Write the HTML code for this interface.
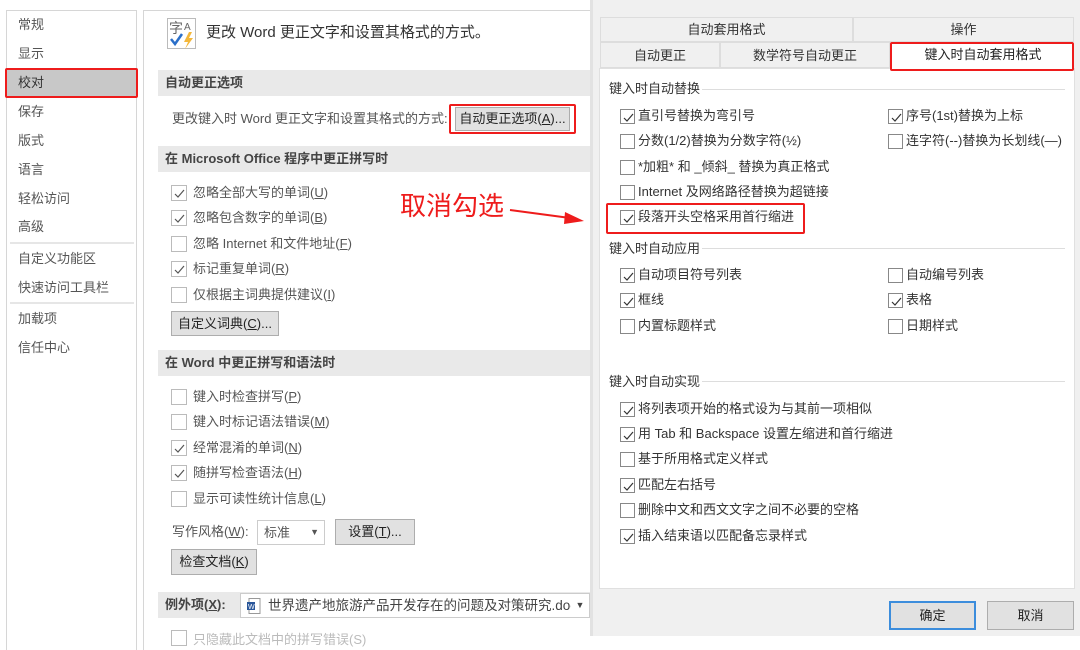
<!DOCTYPE html>
<html><head><meta charset="utf-8"><style>
*{margin:0;padding:0;box-sizing:border-box}
body{width:1080px;height:636px;overflow:hidden;background:#fff;font-family:"Liberation Sans","Noto Sans CJK SC",sans-serif;font-size:13px;color:#333;position:relative}
.a{position:absolute;white-space:nowrap}
.t{position:absolute;white-space:nowrap;line-height:16px}
.cb{position:absolute;width:15px;height:15px;border:1px solid #888;background:#fff}
.cb.l{border-color:#bbb;width:16px;height:16px}
.cb svg{position:absolute;left:1px;top:1px}
.band{position:absolute;left:158px;width:432px;height:26px;background:#e9e9e9;font-weight:bold;color:#444;padding-left:7px;line-height:26px}
.btn{position:absolute;background:#e1e1e1;border:1px solid #adadad;text-align:center;color:#222}
.grp{position:absolute;left:609px;color:#333}
.line{position:absolute;height:1px;background:#ddd}
</style></head><body>
<div class="a" style="left:6px;top:10px;width:131px;height:640px;border:1px solid #d6d6d6;border-bottom:none"></div>
<div class="a" style="left:5px;top:68px;width:133px;height:30px;background:#c8c8c8;border:2px solid #ee1c1c;border-radius:2px"></div>
<div class="t" style="left:18px;top:17px;color:#555">常规</div>
<div class="t" style="left:18px;top:46px;color:#555">显示</div>
<div class="t" style="left:18px;top:75px;color:#333">校对</div>
<div class="t" style="left:18px;top:104px;color:#555">保存</div>
<div class="t" style="left:18px;top:133px;color:#555">版式</div>
<div class="t" style="left:18px;top:162px;color:#555">语言</div>
<div class="t" style="left:18px;top:191px;color:#555">轻松访问</div>
<div class="t" style="left:18px;top:219px;color:#555">高级</div>
<div class="a" style="left:10px;top:242px;width:124px;height:2px;background:#e6e6e6"></div>
<div class="t" style="left:18px;top:251px;color:#555">自定义功能区</div>
<div class="t" style="left:18px;top:280px;color:#555">快速访问工具栏</div>
<div class="a" style="left:10px;top:302px;width:124px;height:2px;background:#e6e6e6"></div>
<div class="t" style="left:18px;top:311px;color:#555">加载项</div>
<div class="t" style="left:18px;top:340px;color:#555">信任中心</div>
<div class="a" style="left:143px;top:10px;width:448px;height:640px;border:1px solid #d6d6d6;border-bottom:none;border-right:none"></div>
<svg class="a" style="left:167px;top:18px" width="32" height="32" viewBox="0 0 32 32">
<rect x="0.5" y="0.5" width="28" height="30" fill="#fff" stroke="#bbb"/>
<text x="2" y="15" font-size="14" fill="#666" font-family="Noto Sans CJK SC">字</text>
<text x="17" y="12" font-size="10" fill="#666">A</text>
<path d="M4 21 L8 26 L15 16" stroke="#2b6fc9" stroke-width="2.5" fill="none"/>
<path d="M22 14 L17 24 L21 24 L18 31 L26 20 L22 20 L25 14Z" fill="#f4b73a"/>
</svg>
<div class="t" style="left:206px;top:25px;font-size:15px;color:#333">更改 Word 更正文字和设置其格式的方式。</div>
<div class="band" style="top:70px">自动更正选项</div>
<div class="t" style="left:172px;top:111px;color:#555">更改键入时 Word 更正文字和设置其格式的方式:</div>
<div class="btn" style="left:455px;top:107px;width:115px;height:24px;line-height:22px">自动更正选项(<u>A</u>)...</div>
<div class="a" style="left:449px;top:104px;width:127px;height:30px;border:2px solid #ee1c1c;border-radius:2px"></div>
<div class="band" style="top:146px">在 Microsoft Office 程序中更正拼写时</div>
<div class="cb l" style="left:171px;top:185px"><svg width="13" height="13"><path d="M2 7 L5 10 L11 3" stroke="#555" fill="none" stroke-width="1.2"/></svg></div>
<div class="t" style="left:193px;top:185px;color:#555">忽略全部大写的单词(<u>U</u>)</div>
<div class="cb l" style="left:171px;top:210px"><svg width="13" height="13"><path d="M2 7 L5 10 L11 3" stroke="#555" fill="none" stroke-width="1.2"/></svg></div>
<div class="t" style="left:193px;top:210px;color:#555">忽略包含数字的单词(<u>B</u>)</div>
<div class="cb l" style="left:171px;top:236px"></div>
<div class="t" style="left:193px;top:236px;color:#555">忽略 Internet 和文件地址(<u>F</u>)</div>
<div class="cb l" style="left:171px;top:261px"><svg width="13" height="13"><path d="M2 7 L5 10 L11 3" stroke="#555" fill="none" stroke-width="1.2"/></svg></div>
<div class="t" style="left:193px;top:261px;color:#555">标记重复单词(<u>R</u>)</div>
<div class="cb l" style="left:171px;top:287px"></div>
<div class="t" style="left:193px;top:287px;color:#555">仅根据主词典提供建议(<u>I</u>)</div>
<div class="btn" style="left:171px;top:311px;width:108px;height:25px;line-height:23px">自定义词典(<u>C</u>)...</div>
<div class="band" style="top:350px">在 Word 中更正拼写和语法时</div>
<div class="cb l" style="left:171px;top:389px"></div>
<div class="t" style="left:193px;top:389px;color:#555">键入时检查拼写(<u>P</u>)</div>
<div class="cb l" style="left:171px;top:414px"></div>
<div class="t" style="left:193px;top:414px;color:#555">键入时标记语法错误(<u>M</u>)</div>
<div class="cb l" style="left:171px;top:440px"><svg width="13" height="13"><path d="M2 7 L5 10 L11 3" stroke="#555" fill="none" stroke-width="1.2"/></svg></div>
<div class="t" style="left:193px;top:440px;color:#555">经常混淆的单词(<u>N</u>)</div>
<div class="cb l" style="left:171px;top:465px"><svg width="13" height="13"><path d="M2 7 L5 10 L11 3" stroke="#555" fill="none" stroke-width="1.2"/></svg></div>
<div class="t" style="left:193px;top:465px;color:#555">随拼写检查语法(<u>H</u>)</div>
<div class="cb l" style="left:171px;top:491px"></div>
<div class="t" style="left:193px;top:491px;color:#555">显示可读性统计信息(<u>L</u>)</div>
<div class="t" style="left:172px;top:524px;color:#555">写作风格(<u>W</u>):</div>
<div class="a" style="left:257px;top:520px;width:68px;height:25px;border:1px solid #ccc;background:#fff;padding-left:6px;line-height:23px;color:#555">标准<span style="position:absolute;right:5px;top:0;font-size:9px">▼</span></div>
<div class="btn" style="left:335px;top:519px;width:80px;height:26px;line-height:24px">设置(<u>T</u>)...</div>
<div class="btn" style="left:171px;top:549px;width:86px;height:26px;line-height:24px">检查文档(<u>K</u>)</div>
<div class="band" style="top:592px;width:432px">例外项(<u>X</u>):</div>
<div class="a" style="left:240px;top:593px;width:350px;height:25px;border:1px solid #ccc;background:#fff;line-height:23px;padding-left:27px;color:#444;font-size:13.5px;overflow:hidden">世界遗产地旅游产品开发存在的问题及对策研究.docx<span style="position:absolute;right:0;top:0;width:18px;background:#fff;text-align:center;font-size:9px">▼</span>
<svg style="position:absolute;left:6px;top:4px" width="14" height="16"><rect x="2" y="0.5" width="11" height="15" fill="#fff" stroke="#999"/><rect x="0" y="4" width="8" height="8" fill="#2b579a"/><text x="1" y="11" font-size="7" fill="#fff">W</text></svg></div>
<div class="cb l" style="left:171px;top:630px"></div>
<div class="t" style="left:193px;top:632px;color:#bbb">只隐藏此文档中的拼写错误(S)</div>
<div class="a" style="left:400px;top:191px;font-size:26px;color:#ee1c1c;line-height:30px">取消勾选</div>
<svg class="a" style="left:505px;top:205px" width="85" height="25"><path d="M5 5 L65 13" stroke="#ee1c1c" stroke-width="2"/><path d="M60 7 L79 16 L59 19 Z" fill="#ee1c1c"/></svg>
<div class="a" style="left:590px;top:0;width:490px;height:636px;background:#f0f0f0;border-left:3px solid #e2e2e2"></div>
<div class="a" style="left:600px;top:17px;width:253px;height:25px;border:1px solid #ddd;text-align:center;line-height:24px">自动套用格式</div>
<div class="a" style="left:853px;top:17px;width:221px;height:25px;border:1px solid #ddd;text-align:center;line-height:24px">操作</div>
<div class="a" style="left:600px;top:42px;width:120px;height:26px;border:1px solid #ddd;text-align:center;line-height:26px">自动更正</div>
<div class="a" style="left:720px;top:42px;width:170px;height:26px;border:1px solid #ddd;text-align:center;line-height:26px">数学符号自动更正</div>
<div class="a" style="left:599px;top:68px;width:476px;height:521px;background:#fff;border:1px solid #e0e0e0"></div>
<div class="a" style="left:892px;top:42px;width:182px;height:28px;background:#fff;text-align:center;line-height:26px;color:#222">键入时自动套用格式</div>
<div class="a" style="left:890px;top:42px;width:184px;height:29px;border:2px solid #ee1c1c;border-radius:2px"></div>

<div class="grp t" style="top:81px">键入时自动替换</div>
<div class="line" style="left:702px;top:89px;width:363px"></div>
<div class="grp t" style="top:241px">键入时自动应用</div>
<div class="line" style="left:702px;top:248px;width:363px"></div>
<div class="grp t" style="top:374px">键入时自动实现</div>
<div class="line" style="left:702px;top:381px;width:363px"></div>

<div class="cb" style="left:620px;top:109px"><svg width="13" height="13"><path d="M2 7 L5 10 L11 3" stroke="#333" fill="none" stroke-width="1.2"/></svg></div><div class="t" style="left:638px;top:108px">直引号替换为弯引号</div>
<div class="cb" style="left:888px;top:109px"><svg width="13" height="13"><path d="M2 7 L5 10 L11 3" stroke="#333" fill="none" stroke-width="1.2"/></svg></div><div class="t" style="left:906px;top:108px">序号(1st)替换为上标</div>
<div class="cb" style="left:620px;top:134px"></div><div class="t" style="left:638px;top:133px">分数(1/2)替换为分数字符(½)</div>
<div class="cb" style="left:888px;top:134px"></div><div class="t" style="left:906px;top:133px">连字符(--)替换为长划线(—)</div>
<div class="cb" style="left:620px;top:160px"></div><div class="t" style="left:638px;top:159px">*加粗* 和 _倾斜_ 替换为真正格式</div>
<div class="cb" style="left:620px;top:185px"></div><div class="t" style="left:638px;top:184px">Internet 及网络路径替换为超链接</div>
<div class="cb" style="left:620px;top:210px"><svg width="13" height="13"><path d="M2 7 L5 10 L11 3" stroke="#333" fill="none" stroke-width="1.2"/></svg></div><div class="t" style="left:638px;top:209px">段落开头空格采用首行缩进</div>
<div class="a" style="left:606px;top:203px;width:199px;height:31px;border:2px solid #ee1c1c;border-radius:2px"></div>

<div class="cb" style="left:620px;top:268px"><svg width="13" height="13"><path d="M2 7 L5 10 L11 3" stroke="#333" fill="none" stroke-width="1.2"/></svg></div><div class="t" style="left:638px;top:267px">自动项目符号列表</div>
<div class="cb" style="left:888px;top:268px"></div><div class="t" style="left:906px;top:267px">自动编号列表</div>
<div class="cb" style="left:620px;top:293px"><svg width="13" height="13"><path d="M2 7 L5 10 L11 3" stroke="#333" fill="none" stroke-width="1.2"/></svg></div><div class="t" style="left:638px;top:292px">框线</div>
<div class="cb" style="left:888px;top:293px"><svg width="13" height="13"><path d="M2 7 L5 10 L11 3" stroke="#333" fill="none" stroke-width="1.2"/></svg></div><div class="t" style="left:906px;top:292px">表格</div>
<div class="cb" style="left:620px;top:319px"></div><div class="t" style="left:638px;top:318px">内置标题样式</div>
<div class="cb" style="left:888px;top:319px"></div><div class="t" style="left:906px;top:318px">日期样式</div>

<div class="cb" style="left:620px;top:402px"><svg width="13" height="13"><path d="M2 7 L5 10 L11 3" stroke="#333" fill="none" stroke-width="1.2"/></svg></div><div class="t" style="left:638px;top:401px">将列表项开始的格式设为与其前一项相似</div>
<div class="cb" style="left:620px;top:427px"><svg width="13" height="13"><path d="M2 7 L5 10 L11 3" stroke="#333" fill="none" stroke-width="1.2"/></svg></div><div class="t" style="left:638px;top:426px">用 Tab 和 Backspace 设置左缩进和首行缩进</div>
<div class="cb" style="left:620px;top:452px"></div><div class="t" style="left:638px;top:451px">基于所用格式定义样式</div>
<div class="cb" style="left:620px;top:478px"><svg width="13" height="13"><path d="M2 7 L5 10 L11 3" stroke="#333" fill="none" stroke-width="1.2"/></svg></div><div class="t" style="left:638px;top:477px">匹配左右括号</div>
<div class="cb" style="left:620px;top:503px"></div><div class="t" style="left:638px;top:502px">删除中文和西文文字之间不必要的空格</div>
<div class="cb" style="left:620px;top:529px"><svg width="13" height="13"><path d="M2 7 L5 10 L11 3" stroke="#333" fill="none" stroke-width="1.2"/></svg></div><div class="t" style="left:638px;top:528px">插入结束语以匹配备忘录样式</div>

<div class="btn" style="left:889px;top:601px;width:87px;height:29px;line-height:25px;border:2px solid #3c8ddc">确定</div>
<div class="btn" style="left:987px;top:601px;width:87px;height:29px;line-height:27px">取消</div>
</body></html>
